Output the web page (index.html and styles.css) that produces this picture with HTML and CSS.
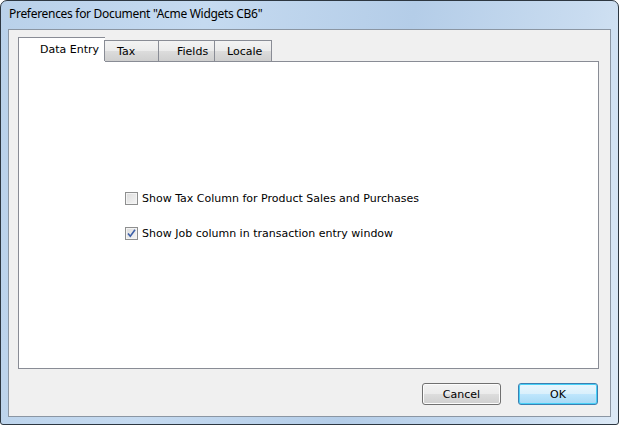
FILE: index.html
```html
<!DOCTYPE html>
<html>
<head>
<meta charset="utf-8">
<link rel="stylesheet" href="styles.css">
</head>
<body>
<div class="window">
  <div class="titlebar">Preferences for Document "Acme Widgets CB6"</div>
  <div class="client">
    <div class="tabs">
      <div class="tab active"><span>Data Entry</span></div>
      <div class="tab tax"><span>Tax</span></div>
      <div class="tab fields"><span>Fields</span></div>
      <div class="tab locale"><span>Locale</span></div>
    </div>
    <div class="panel">
      <label class="check">
        <span class="box"></span>
        <span class="lbl">Show Tax Column for Product Sales and Purchases</span>
      </label>
      <label class="check">
        <span class="box">
          <svg width="11" height="11" viewBox="0 0 11 11"><path d="M2 5.5 L4.3 8.2 L9 1.8" fill="none" stroke="#3c5fa8" stroke-width="1.6"/></svg>
        </span>
        <span class="lbl">Show Job column in transaction entry window</span>
      </label>
    </div>
    <div class="buttons">
      <div class="btn">Cancel</div>
      <div class="btn default">OK</div>
    </div>
  </div>
</div>
</body>
</html>
```
FILE: styles.css
```css
html, body { margin: 0; padding: 0; background: #fff; }
.window {
  width: 619px; height: 425px; box-sizing: border-box;
  border: 1px solid #2d3741;
  border-radius: 7px 7px 3px 3px;
  background: linear-gradient(100deg, #b9d1ea 0%, #c5daf0 30%, #b4cde8 60%, #c9dcf0 85%, #dce9f6 100%);
  display: flex; flex-direction: column;
  font-family: "DejaVu Sans", sans-serif;
}
.titlebar {
  height: 28px; box-sizing: border-box;
  padding: 5px 0 0 8px;
  font-family: "Noto Sans", sans-serif; font-size: 12px; color: #000;
  line-height: 16px; letter-spacing: -0.3px;
}
.client {
  flex: 1; margin: 0 7px 7px 7px;
  border: 1px solid #8b96a3;
  background: #f0f0f0;
  padding: 7px 11px 0 9px;
  display: flex; flex-direction: column;
}
.tabs { display: flex; height: 24px; align-items: flex-end; position: relative; z-index: 1; }
.tab {
  box-sizing: border-box; height: 21px;
  border: 1px solid #898c95; border-bottom: none;
  background: linear-gradient(#f3f3f3 0%, #ebebeb 50%, #dcdcdc 51%, #cfcfcf 100%);
  font-size: 11px; color: #000;
  display: flex; justify-content: flex-start; padding-top: 4px;
  margin-left: -1px;
}
.tab.active {
  height: 25px; margin-left: 0; margin-bottom: -1px; background: #fff;
  width: 87px; padding-top: 5px; padding-left: 21px; border-right: none;
}
.tab.tax { width: 55px; padding-left: 12px; }
.tab.fields { width: 57px; padding-left: 18px; }
.tab.locale { width: 58px; padding-left: 12px; }
.panel {
  box-sizing: border-box; height: 308px;
  border: 1px solid #898c95; background: #fff;
  padding: 130px 0 0 106px;
  display: flex; flex-direction: column; gap: 22px;
}
.check { display: flex; align-items: center; font-size: 11px; color: #000; height: 13px; }
.box {
  width: 13px; height: 13px; box-sizing: border-box;
  border: 1px solid #8e8f8f;
  background: linear-gradient(135deg, #dcdcdc, #f5f5f5);
  box-shadow: inset 0 0 0 1px #f4f4f4;
  margin-right: 4px; display: flex; align-items: center; justify-content: center;
}
.buttons { display: flex; justify-content: flex-end; gap: 17px; padding-top: 14px; padding-right: 1px; }
.btn {
  width: 79px; height: 22px; box-sizing: border-box;
  border: 1px solid #707070; border-radius: 3px;
  background: linear-gradient(#f2f2f2 0%, #ebebeb 50%, #dddddd 51%, #cfcfcf 100%);
  box-shadow: inset 0 0 0 1px #fcfcfc;
  font-size: 11px; display: flex; align-items: center; justify-content: center;
}
.btn.default {
  width: 80px; border-color: #3c7fb1;
  background: linear-gradient(#eaf6fd 0%, #d9f0fc 50%, #bee6fd 51%, #a7d9f5 100%);
  box-shadow: inset 0 0 0 1px #48d0f7;
}
```
